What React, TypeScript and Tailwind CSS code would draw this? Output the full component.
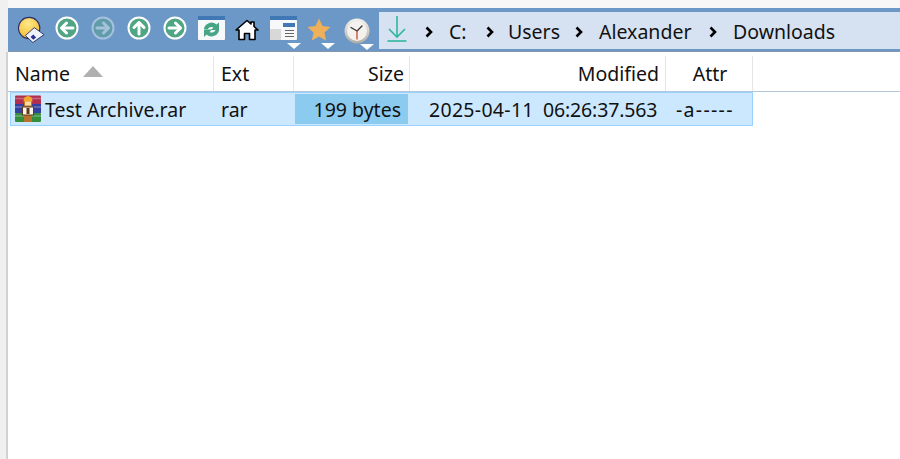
import React from "react"

const FONT = "font-['Noto_Sans','Open_Sans',sans-serif]"

function CircleArrow({ dir, dim }: { dir: "left" | "right" | "up"; dim?: boolean }) {
  const rot = dir === "left" ? 180 : dir === "up" ? -90 : 0
  return (
    <svg width="24" height="24" viewBox="0 0 24 24" className={dim ? "opacity-40" : ""}>
      <circle cx="12" cy="12" r="10.500" fill="#4fa584" stroke="#fff" strokeWidth="2" />
      <g transform={`rotate(${rot} 12 12)`} fill="none" stroke="#fff" strokeWidth="3" strokeLinecap="round" strokeLinejoin="round">
        <path d="M6 12h11" />
        <path d="M12.500 7L17.500 12l-5 5" />
      </g>
    </svg>
  )
}

function DropTri({ bottom }: { bottom: string }) {
  return (
    <svg width="14" height="6" viewBox="0 0 14 6" className={`absolute right-[-4px] ${bottom}`}>
      <path d="M0 0h14L7 6z" fill="#fff" />
    </svg>
  )
}

function DriveIcon() {
  return (
    <svg width="28" height="27" viewBox="0 0 30 29">
      <defs>
        <radialGradient id="disc" cx="0.45" cy="0.3" r="0.75">
          <stop offset="0" stopColor="#ffe98a" />
          <stop offset="0.7" stopColor="#f5c748" />
          <stop offset="1" stopColor="#d9a83a" />
        </radialGradient>
      </defs>
      <circle cx="13" cy="13" r="11.500" fill="url(#disc)" stroke="#2c2f66" strokeWidth="1.200" />
      <path d="M17 28.500l-8-7.500 9.500-8.500 10.500 7.500z" fill="#eef1fa" stroke="#2c2f66" strokeWidth="1" strokeLinejoin="round" />
      <path d="M14.500 22.500l3-2.500 3 3-3 2.500z" fill="#2a2f8c" />
    </svg>
  )
}

function RefreshIcon() {
  return (
    <svg width="27" height="24" viewBox="0 0 27 24">
      <rect width="27" height="24" rx="1" fill="#f7f8f9" />
      <rect width="27" height="4" fill="#3f78b5" />
      <path d="M6 13a7.500 7 0 0 1 12.500-4.500l2.500-2V14h-8l2.500-2.500a4 3.500 0 0 0-6 2z" fill="#45a584" />
      <path d="M21 14a7.500 7 0 0 1-12.500 4.500L6 21v-7.500h8l-2.500 2.500a4 3.500 0 0 0 6-2z" fill="#45a584" />
    </svg>
  )
}

function HomeIcon() {
  return (
    <svg width="24" height="22" viewBox="0 0 24 22">
      <path d="M1 11L12 1.500l4 3.500V3h3v4.500L23 11h-3v9.500h-5.500v-6h-5v6H4V11z" fill="#fff" stroke="#000" strokeWidth="1.600" strokeLinejoin="round" />
    </svg>
  )
}

function LayoutIcon() {
  return (
    <svg width="27" height="24" viewBox="0 0 27 24">
      <rect width="27" height="24" rx="1" fill="#f7f8f9" />
      <rect width="27" height="4" fill="#3f78b5" />
      <rect x="0" y="13" width="11" height="11" fill="#d8d8d8" />
      <rect x="13" y="7" width="12" height="4" fill="#3f78b5" />
      <path d="M15 14.500h9M15 17.500h9M15 20.500h9" stroke="#666" strokeWidth="1" />
    </svg>
  )
}

function StarIcon() {
  return (
    <svg width="24" height="23" viewBox="0 0 24 23">
      <path d="M12 0.500l3.500 7.500 8 1-6 5.500 1.600 8L12 18.500 4.900 22.500l1.600-8-6-5.500 8-1z" fill="#efb05a" />
    </svg>
  )
}

function ClockIcon() {
  return (
    <svg width="26" height="26" viewBox="0 0 26 26">
      <defs>
        <linearGradient id="rim" x1="0" y1="0" x2="0" y2="1">
          <stop offset="0" stopColor="#f4f2ee" />
          <stop offset="1" stopColor="#b0aca6" />
        </linearGradient>
      </defs>
      <circle cx="13" cy="13" r="12.500" fill="url(#rim)" />
      <circle cx="13" cy="13" r="10" fill="#f3f2ef" />
      <path d="M13 13L7 9.500M13 13l5-5" stroke="#333" strokeWidth="1.300" strokeLinecap="round" />
      <path d="M13 13v8" stroke="#c9482f" strokeWidth="1.300" strokeLinecap="round" />
    </svg>
  )
}

function DownloadIcon() {
  return (
    <svg width="20" height="26" viewBox="0 0 20 26" fill="none" stroke="#2fb79a" strokeWidth="1.600" className="mb-[3px]">
      <path d="M10 0v21" />
      <path d="M2 13l8 8 8-8" />
      <path d="M0.500 25h19" />
    </svg>
  )
}

function Chevron() {
  return (
    <svg width="9" height="12" viewBox="0 0 9 12" fill="none" stroke="#000" strokeWidth="2.600" className="mt-[3px] shrink-0">
      <path d="M1.500 1.500L6 6 1.500 10.500" />
    </svg>
  )
}

function RarIcon() {
  return (
    <svg width="28" height="28" viewBox="0 0 28 28" className="shrink-0">
      <rect x="1" y="0.500" width="26" height="9" rx="1" fill="#b02f50" />
      <rect x="1" y="9" width="26" height="9" fill="#34409f" />
      <rect x="1" y="18" width="26" height="9" rx="1" fill="#338f3e" />
      <path d="M1 3.500h26M1 12h26M1 21h26" stroke="#ffffff" strokeOpacity="0.28" strokeWidth="1.500" />
      <rect x="10" y="2" width="8" height="25" fill="#b9722c" />
      <path d="M9.500 6.500a4.500 5.500 0 0 1 9 0z" fill="#f4a72c" />
      <rect x="11" y="6.500" width="6" height="4" fill="#f9dda0" />
      <rect x="8.500" y="12" width="11" height="8" fill="#fdf6e8" stroke="#5a3a1a" strokeWidth="1" />
      <rect x="12.500" y="13" width="3" height="6" fill="#5a3a1a" />
    </svg>
  )
}

const Tool = ({ children, cls }: { children: React.ReactNode; cls?: string }) => (
  <div className={`relative flex h-[36px] w-[36px] shrink-0 items-center justify-center ${cls ?? ""}`}>
    <div className="relative flex">{children}</div>
  </div>
)

export default function App() {
  return (
    <div className={`${FONT} flex h-[459px] w-[900px] overflow-hidden bg-white text-[19.5px] text-[#111]`}>
      <div className="flex w-[8px] shrink-0 flex-col bg-[#f0f0f0]">
        <div className="h-[52px]" />
        <div className="flex-1 border-r-[2px] border-[#d2d2d2]" />
      </div>
      <div className="flex min-w-0 flex-1 flex-col">
        <div className="h-[8px] shrink-0 bg-[#f7f7f7]" />

        <div className="flex h-[44px] shrink-0 items-center border-b border-[#8596ac] bg-[#6b98c6] pl-[5px] pt-[2px]">
          <Tool cls="pb-[3px]"><DriveIcon /></Tool>
          <Tool cls="pb-[5px]"><CircleArrow dir="left" /></Tool>
          <Tool cls="pb-[5px]"><CircleArrow dir="right" dim /></Tool>
          <Tool cls="pb-[5px]"><CircleArrow dir="up" /></Tool>
          <Tool cls="pb-[5px]"><CircleArrow dir="right" /></Tool>
          <Tool cls="pb-[5px]"><RefreshIcon /></Tool>
          <Tool cls="pb-[1px]"><HomeIcon /></Tool>
          <Tool cls="pb-[5px]"><LayoutIcon /><DropTri bottom="bottom-[-9px]" /></Tool>
          <Tool cls="pb-[3px]"><StarIcon /><DropTri bottom="bottom-[-8px]" /></Tool>
          <Tool cls="pl-[4px]"><ClockIcon /><DropTri bottom="bottom-[-6px]" /></Tool>
          <div className="ml-[6px] flex h-[37px] flex-1 items-center whitespace-nowrap bg-[#d6e2f1] pl-[8px]">
            <DownloadIcon />
            <div className="ml-[18px] flex"><Chevron /></div>
            <span className="ml-[15px] w-[37px] pt-[3px]">C:</span>
            <Chevron />
            <span className="ml-[13px] w-[67px] pt-[3px]">Users</span>
            <Chevron />
            <span className="ml-[15px] w-[110px] pt-[3px]">Alexander</span>
            <Chevron />
            <span className="ml-[15px] pt-[3px]">Downloads</span>
          </div>
        </div>

        <div className="flex h-[40px] shrink-0 border-b border-[#b3c6da] pt-[4px]">
          <div className="flex w-[206px] items-center border-r border-[#e5e5e5] pl-[7px]">
            Name
            <svg width="20" height="11" viewBox="0 0 20 11" className="ml-[13px] mt-[-4px]">
              <path d="M10 0l10 11H0z" fill="#b0b0b0" />
            </svg>
          </div>
          <div className="flex w-[80px] items-center border-r border-[#e5e5e5] pl-[7px]">Ext</div>
          <div className="flex w-[116px] items-center justify-end border-r border-[#e5e5e5] pr-[5px]">Size</div>
          <div className="flex w-[256px] items-center justify-end border-r border-[#e5e5e5] pr-[6px]">Modified</div>
          <div className="flex w-[87px] items-center justify-center border-r border-[#e5e5e5] pl-[2px]">Attr</div>
        </div>

        <div className="ml-[2px] flex h-[34px] w-[743px] items-center whitespace-nowrap border border-[#99d1ff] bg-[#cce8ff]">
          <div className="flex w-[203px] items-center pl-[3px]">
            <RarIcon />
            <span className="ml-[3px] pt-[1px]">Test Archive.rar</span>
          </div>
          <div className="w-[81px] pl-[7px] pt-[1px]">rar</div>
          <div className="flex h-[30px] w-[113px] items-center justify-end bg-[#8ccbf0] pr-[7px] pt-[1px]">199 bytes</div>
          <div className="w-[21px]" />
          <div className="w-[104px] pt-[1px] tracking-[0.3px]">2025-04-11</div>
          <div className="ml-[10px] w-[118px] pt-[1px] tracking-[-0.15px]">06:26:37.563</div>
          <div className="ml-[15px] pt-[1px] tracking-[1.3px]">-a-----</div>
        </div>
      </div>
    </div>
  )
}
